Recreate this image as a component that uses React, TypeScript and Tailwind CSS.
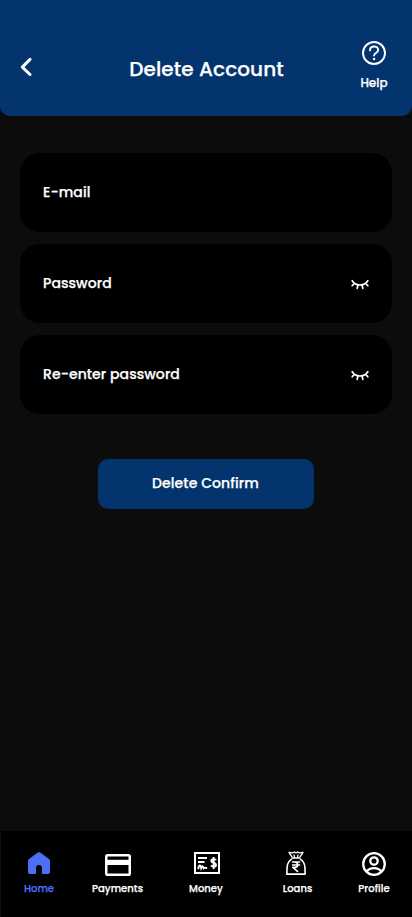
import React from 'react';

const LashIcon = () => (
  <svg className="h-[11px] w-[18px]" viewBox="0 0 18 11" fill="none" stroke="white" strokeWidth="1.7" strokeLinecap="round">
    <path d="M1.2 1.7C4.6 7.4 13.4 7.4 16.8 1.7M3.3 4.3L1.2 6.8M6.9 6L6.2 9.4M11.1 6l.7 3.4M14.7 4.3L16.8 6.8" />
  </svg>
);

const HomeIcon = () => (
  <svg className="h-[22px] w-[22px]" viewBox="0 0 22 22" fill="#4c6ff8">
    <path d="M9.8.5a2 2 0 0 1 2.4 0l8.5 6.2A3 3 0 0 1 22 9.2V20a2 2 0 0 1-2 2h-6v-6a3 3 0 0 0-6 0v6H2a2 2 0 0 1-2-2V9.2a3 3 0 0 1 1.3-2.5z" />
  </svg>
);

const CardIcon = () => (
  <svg className="mt-[3px] h-[22px] w-[26px]" viewBox="0 0 26 22" fill="none">
    <rect x="1.25" y="1.25" width="23.5" height="19.5" rx="1.6" stroke="white" strokeWidth="2.5" />
    <path d="M1 5.8h24v5.2H1z" fill="white" />
  </svg>
);

const MoneyIcon = () => (
  <svg className="ml-[2px] h-[22px] w-[26px]" viewBox="0 0 26 22" fill="none" stroke="white">
    <rect x="1" y="1" width="24" height="20" strokeWidth="2" />
    <path d="M4 6h9M4 10h6.5" strokeWidth="2" />
    <path d="M4.2 17.2c.8-5 2.4-4.2 3-1.4 1-2.4 1.8-1.6 2.4.4 1.2-.8 1.8-.2 3.6-.2" strokeWidth="2" />
    <path d="M22 8.2c-.5-1.3-4.6-1.5-4.6.7 0 2.3 4.6 1.5 4.6 4 0 2.2-4.3 2.1-4.9.5M19.6 5v12" strokeWidth="2" />
  </svg>
);

const LoanIcon = () => (
  <svg className="mr-[4px] h-6 w-5" viewBox="0 0 20 24" fill="none" stroke="white" strokeWidth="1.6" strokeLinejoin="round">
    <path d="M6.4 6.6L3 1.4l3.6.4L8.3 1l1.7.8 1.7-.8 1.7.8 3.6-.4-3.4 5.2" strokeWidth="1.3" />
    <path d="M6 7h8M8 3.5l.5 3M12 3.5l-.5 3" strokeWidth="1.3" />
    <path d="M6 7.8C3 9.8 1.3 12.6 1.1 16L.8 23.1h18.4L18.9 16c-.2-3.4-1.9-6.2-4.9-8.2" />
    <path d="M6 11h8.2M6 14h8.2M6 11h2.3c4.4 0 4.4 5.4 0 5.4H6.9l5.2 4.4" strokeWidth="1.7" />
  </svg>
);

const ProfileIcon = () => (
  <svg className="mt-[2px] mr-[1px] h-6 w-6" viewBox="0 0 24 24" fill="none" stroke="white" strokeWidth="2.3">
    <circle cx="12" cy="12" r="10.8" />
    <circle cx="12" cy="9" r="3.7" />
    <path d="M4.5 19.5c3.5-4.6 11.5-4.6 15 0" />
  </svg>
);

const fields = [
  { label: 'E-mail', secret: false },
  { label: 'Password', secret: true },
  { label: 'Re-enter password', secret: true },
];

const tabs = [
  { label: 'Home', Icon: HomeIcon, style: 'text-[#4c6ff8]' },
  { label: 'Payments', Icon: CardIcon, style: 'text-white' },
  { label: 'Money', Icon: MoneyIcon, style: 'text-white' },
  { label: 'Loans', Icon: LoanIcon, style: 'text-white' },
  { label: 'Profile', Icon: ProfileIcon, style: 'text-white' },
];

export default function App() {
  return (
    <div className="flex h-[917px] w-[412px] flex-col overflow-hidden bg-[#0c0c0c] font-['Poppins','Inter',sans-serif] font-medium text-white [-webkit-text-stroke:0.25px_currentColor]">
      <header className="flex h-[116px] shrink-0 rounded-b-[10px] bg-[#03346e]">
        <button aria-label="Back" className="ml-[20px] mt-[57px] h-5 w-3">
          <svg className="h-5 w-3" viewBox="0 0 12 20" fill="none" stroke="white" strokeWidth="2.9" strokeLinecap="round" strokeLinejoin="round">
            <path d="M10 2.4L2.3 10.1 10 17.5" />
          </svg>
        </button>
        <h1 className="ml-[95px] mt-[54px] w-[159px] whitespace-nowrap text-center text-[20px] leading-[30px] tracking-[0.1px]">Delete Account</h1>
        <div className="ml-[68px] mt-[41px] flex w-10 flex-col items-center">
          <svg className="h-6 w-6" viewBox="0 0 24 24" fill="none" stroke="white" strokeWidth="1.9" strokeLinecap="round">
            <circle cx="12" cy="12" r="11" />
            <path d="M8 9.4c0-5.2 8.2-5.2 8.2-.3 0 2.9-4.1 2.9-4.1 5.3" />
            <circle cx="12.1" cy="18" r="1.2" fill="white" stroke="none" />
          </svg>
          <span className="mt-[9px] text-[12px] leading-[18px]">Help</span>
        </div>
      </header>
      <main className="flex flex-1 flex-col px-5 pt-[37px]">
        <div className="flex flex-col gap-3">
          {fields.map(({ label, secret }) => (
            <div key={label} className="flex h-[79px] items-center justify-between rounded-[20px] bg-black pl-[23px] pr-[23px]">
              <span className="pb-[2px] text-[14px] leading-5 tracking-[0.08px]">{label}</span>
              {secret && <span className="mt-[2px]"><LashIcon /></span>}
            </div>
          ))}
        </div>
        <button className="mt-[45px] h-[50px] w-[216px] self-center rounded-[10px] bg-[#03346e] pb-[2px] pr-[1px] text-[14px] tracking-[0.1px]">Delete Confirm</button>
      </main>
      <nav className="ml-px grid h-[86px] shrink-0 grid-cols-[76px_81px_96px_87px_66px] bg-black pt-5 text-[10px] tracking-[0.05px]">
        {tabs.map(({ label, Icon, style }) => (
          <a key={label} className={`flex flex-col items-center ${style}`}>
            <span className="flex h-6 items-center"><Icon /></span>
            <span className="mt-[6px] leading-[15px]">{label}</span>
          </a>
        ))}
      </nav>
    </div>
  );
}
